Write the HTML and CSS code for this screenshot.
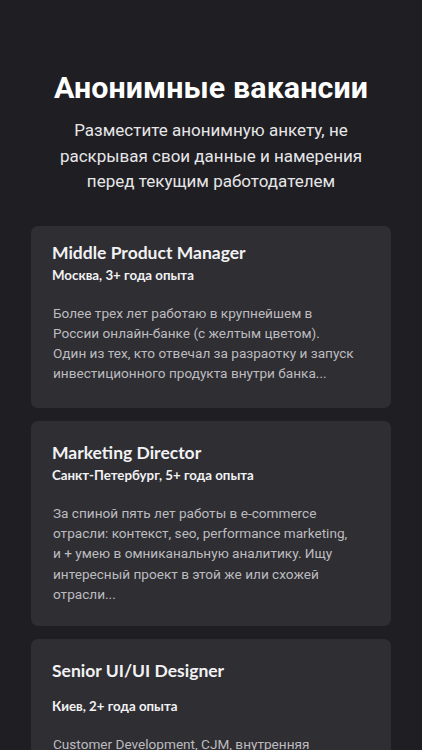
FILE: index.html
```html
<!DOCTYPE html>
<html lang="ru">
<head>
<meta charset="utf-8">
<title>Анонимные вакансии</title>
<link rel="stylesheet" href="styles.css">
</head>
<body>
<main class="page">
  <header class="hero">
    <h1 class="hero-title">Анонимные вакансии</h1>
    <p class="hero-text">Разместите анонимную анкету, не раскрывая свои данные и намерения перед текущим работодателем</p>
  </header>
  <section class="list">
    <article class="card card-first">
      <h2 class="card-title">Middle Product Manager</h2>
      <div class="card-meta">Москва, 3+ года опыта</div>
      <p class="card-text">Более трех лет работаю в крупнейшем в<br>России онлайн-банке (с желтым цветом).<br>Один из тех, кто отвечал за разраотку и запуск<br>инвестиционного продукта внутри банка...</p>
    </article>
    <article class="card">
      <h2 class="card-title">Marketing Director</h2>
      <div class="card-meta">Санкт-Петербург, 5+ года опыта</div>
      <p class="card-text">За спиной пять лет работы в e-commerce<br>отрасли: контекст, seo, performance marketing,<br>и + умею в омниканальную аналитику. Ищу<br>интересный проект в этой же или схожей<br>отрасли...</p>
    </article>
    <article class="card">
      <h2 class="card-title">Senior UI/UI Designer</h2>
      <div class="card-meta card-meta-loose">Киев, 2+ года опыта</div>
      <p class="card-text">Customer Development, CJM, внутренняя<br>аналитика и исследования, прототипирование</p>
    </article>
  </section>
</main>
</body>
</html>
```

FILE: styles.css
```css
* { box-sizing: border-box; }
html, body {
  margin: 0;
  padding: 0;
  background: #1f1e23;
  height: 100%;
  overflow: hidden;
}
.page {
  padding: 70px 31px 0;
  font-family: Roboto, "Liberation Sans", sans-serif;
}
.hero {
  text-align: center;
}
.hero-title {
  margin: 0;
  font-size: 30.4px;
  line-height: 36px;
  font-weight: 700;
  color: #ffffff;
  letter-spacing: 0.1px;
}
.hero-text {
  margin: 12px auto 0;
  width: 320px;
  font-size: 17px;
  line-height: 25.5px;
  color: #e6e6e8;
}
.list {
  margin-top: 31px;
  display: flex;
  flex-direction: column;
  gap: 13px;
}
.card {
  background: #2f2e33;
  border-radius: 7px;
  padding: 21px 21px 22px;
}
.card-first {
  padding-top: 16px;
  padding-bottom: 24px;
}
.card-title {
  margin: 0;
  font-family: Lato, "Open Sans", sans-serif;
  font-size: 17.5px;
  line-height: 22px;
  font-weight: 700;
  color: #f2f2f4;
}
.card-meta {
  margin-top: 2px;
  font-family: Lato, "Open Sans", sans-serif;
  font-size: 13.3px;
  line-height: 18px;
  font-weight: 700;
  color: #f2f2f4;
}
.card-meta-loose {
  margin-top: 15px;
}
.card-text {
  margin: 19px 0 0;
  padding-left: 1px;
  font-size: 13.6px;
  line-height: 20.3px;
  color: #bcbcbf;
}
```
